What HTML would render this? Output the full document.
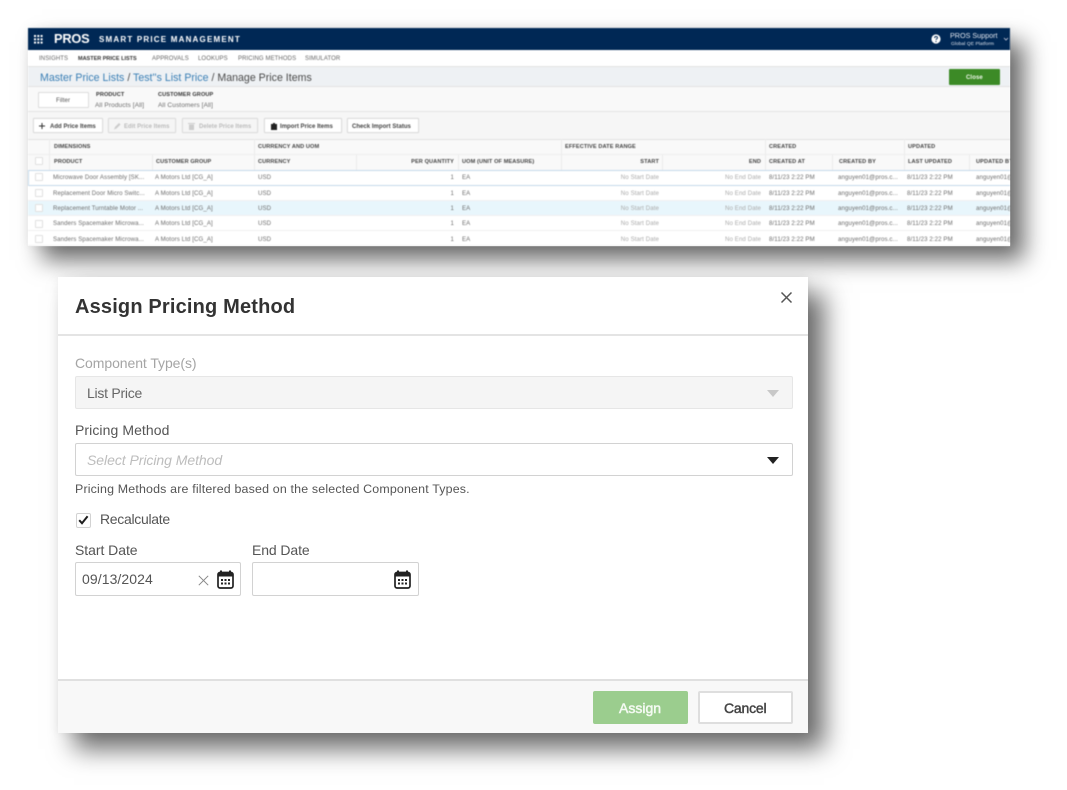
<!DOCTYPE html>
<html lang="en">
<head>
<meta charset="utf-8">
<title>Assign Pricing Method</title>
<style>
html,body{margin:0;padding:0;background:#fff;width:1067px;height:790px;overflow:hidden}
body{position:relative;font-family:"Liberation Sans",sans-serif}
.a{position:absolute}
.t{position:absolute;white-space:nowrap;line-height:1}
#sh1{position:absolute;left:28px;top:28px;width:982px;height:218px;box-shadow:14px 14px 22px rgba(0,0,0,.58),0 0 10px rgba(0,0,0,.06)}
#sh2{position:absolute;left:58px;top:277px;width:750px;height:456px;box-shadow:16px 16px 24px rgba(0,0,0,.58),0 0 10px rgba(0,0,0,.06)}
#top{position:absolute;left:28px;top:28px;width:982px;height:218px;background:#fff;overflow:hidden;filter:blur(.4px)}
#top .t{font-size:6.1px;color:#6e6e6e;letter-spacing:.1px}
#top .h{font-weight:bold;color:#444;font-size:5.6px;letter-spacing:.1px}
#top .nav{font-size:6px;top:27.5px;color:#666}
.btn{position:absolute;top:90px;height:15px;background:#fff;border:1px solid #dcdcdc;border-radius:1px;box-sizing:border-box;box-shadow:0 0 1px rgba(0,0,0,.1)}
.btn span{position:absolute;top:4.5px;font-size:6px;white-space:nowrap;color:#444;line-height:1;font-weight:bold;letter-spacing:.03px}
.row{position:absolute;left:0;width:982px;height:15px;border-bottom:1px solid #f0f0f0;box-sizing:border-box}
.cb{position:absolute;left:7px;width:6px;height:6px;border:1px solid #e0e0e0;background:#fff;border-radius:1px}
.v{position:absolute;top:111px;width:1px;height:31px;background:#ececec}
#dlg{position:absolute;left:58px;top:277px;width:750px;height:456px;background:#fff;overflow:hidden;filter:blur(.3px)}
#dlg .t{color:#555;font-size:14px;letter-spacing:.08px}
.box{position:absolute;box-sizing:border-box;border:1px solid #d2d2d2;border-radius:2px;background:#fff}
</style>
</head>
<body>
<div id="sh1"></div>
<div id="sh2"></div>
<div id="top">
  <div class="a" style="left:0;top:0;width:982px;height:22px;background:#002855"></div>
  <svg class="a" style="left:6px;top:7px" width="9" height="9" viewBox="0 0 9 9" fill="#fff"><rect x="0" y="0" width="2" height="2"/><rect x="3.3" y="0" width="2" height="2"/><rect x="6.6" y="0" width="2" height="2"/><rect x="0" y="3.3" width="2" height="2"/><rect x="3.3" y="3.3" width="2" height="2"/><rect x="6.6" y="3.3" width="2" height="2"/><rect x="0" y="6.6" width="2" height="2"/><rect x="3.3" y="6.6" width="2" height="2"/><rect x="6.6" y="6.6" width="2" height="2"/></svg>
  <div class="t" style="left:26px;top:4.5px;font-weight:bold"><span style="font-size:12.8px;color:#fff;letter-spacing:-.2px">PROS</span></div>
  <div class="t" style="left:71px;top:7.5px;color:#fff;font-size:8px;letter-spacing:1.2px;font-weight:bold">SMART PRICE MANAGEMENT</div>
  <svg class="a" style="left:903px;top:6px" width="10" height="10" viewBox="0 0 10 10"><circle cx="5" cy="5" r="4.6" fill="#fff"/><path d="M3.6 4c0-2 2.9-2 2.9-.2 0 1-1.5 1.1-1.5 2.1" fill="none" stroke="#002855" stroke-width="1"/><circle cx="5" cy="7.5" r=".6" fill="#002855"/></svg>
  <div class="t" style="left:922px;top:3.5px;color:#dfe5ee;font-size:7.2px;letter-spacing:0">PROS Support</div>
  <div class="t" style="left:923px;top:15px;color:#dfe5ee;font-size:4.8px;letter-spacing:.1px">Global QE Platform</div>
  <svg class="a" style="left:975px;top:9px" width="6" height="4" viewBox="0 0 6 4"><path d="M1 1l2 2 2-2" fill="none" stroke="#ccd" stroke-width=".8"/></svg>

  <div class="t nav" style="left:11px">INSIGHTS</div>
  <div class="t nav" style="left:50px;top:28.5px;font-weight:bold;color:#333;font-size:5.5px;letter-spacing:0">MASTER PRICE LISTS</div>
  <div class="t nav" style="left:124px">APPROVALS</div>
  <div class="t nav" style="left:170px">LOOKUPS</div>
  <div class="t nav" style="left:210px">PRICING METHODS</div>
  <div class="t nav" style="left:277px">SIMULATOR</div>

  <div class="a" style="left:0;top:38px;width:982px;height:21px;background:#eef1f4;border-top:1px solid #e3e3e3;border-bottom:1px solid #e3e3e3;box-sizing:border-box"></div>
  <div class="t" style="left:12px;top:44.5px;font-size:10.6px;color:#4a4a4a;letter-spacing:.01px"><span style="color:#3a7fb5">Master Price Lists</span> / <span style="color:#3a7fb5">Test''s List Price</span> / Manage Price Items</div>

  <div class="a" style="left:921px;top:41px;width:51px;height:16px;background:#3c8a26;border-radius:1px"></div>
  <div class="t" style="left:938px;top:46.5px;color:#eef6ea;font-weight:bold;font-size:6px">Close</div>

  <div class="a" style="left:0;top:59px;width:982px;height:25px;background:#f9f9f9;border-bottom:1px solid #e3e3e3;box-sizing:border-box"></div>
  <div class="a" style="left:10px;top:64px;width:51px;height:16px;background:#fff;border:1px solid #dcdcdc;box-sizing:border-box;border-radius:1px"></div>
  <div class="t" style="left:28px;top:69.5px;color:#555">Filter</div>
  <div class="t h" style="left:68px;top:64.5px;color:#333">PRODUCT</div>
  <div class="t" style="left:67px;top:75px;font-size:6.5px">All Products [All]</div>
  <div class="t h" style="left:130px;top:64.5px;color:#333">CUSTOMER GROUP</div>
  <div class="t" style="left:130px;top:75px;font-size:6.5px">All Customers [All]</div>

  <div class="a" style="left:0;top:84px;width:982px;height:27px;background:#f6f6f6"></div>
  <div class="btn" style="left:5px;width:70px"><span style="left:16px">Add Price Items</span></div>
  <svg class="a" style="left:11px;top:95px" width="6" height="6" viewBox="0 0 6 6"><path d="M3 0v6M0 3h6" stroke="#333" stroke-width="1"/></svg>
  <div class="btn" style="left:80px;width:68px;background:#f5f5f5"><span style="left:15px;color:#bbb">Edit Price Items</span></div>
  <svg class="a" style="left:85px;top:94px" width="9" height="8" viewBox="0 0 9 8"><path d="M1 7.5l1-2.5 4-4 1.5 1.5-4 4z" fill="#ccc"/></svg>
  <div class="btn" style="left:154px;width:76px;background:#f5f5f5"><span style="left:16px;color:#bbb">Delete Price Items</span></div>
  <svg class="a" style="left:160px;top:94px" width="7" height="8" viewBox="0 0 7 8"><path d="M0 1h7v1H0zM1 2.5h5V8H1z" fill="#ccc"/></svg>
  <div class="btn" style="left:236px;width:78px"><span style="left:15px">Import Price Items</span></div>
  <svg class="a" style="left:243px;top:94.5px" width="6" height="7" viewBox="0 0 6 7"><path d="M2 0h2v1h2v6H0V1h2z" fill="#222"/></svg>
  <div class="btn" style="left:319px;width:72px"><span style="left:4px">Check Import Status</span></div>

  <div class="a" style="left:0;top:111px;width:982px;height:31px;background:#f9f9f9;border-top:1px solid #e2e2e2;box-sizing:border-box"></div>
  <div class="a" style="left:0;top:126px;width:982px;height:1px;background:#eeeeee"></div>
  <div class="v" style="left:21px"></div><div class="v" style="left:226px"></div><div class="v" style="left:533px"></div><div class="v" style="left:737px"></div><div class="v" style="left:876px"></div>
  <div class="a" style="left:124px;top:127px;width:1px;height:15px;background:#ececec"></div>
  <div class="a" style="left:328px;top:127px;width:1px;height:15px;background:#ececec"></div>
  <div class="a" style="left:430px;top:127px;width:1px;height:15px;background:#ececec"></div>
  <div class="a" style="left:634px;top:127px;width:1px;height:15px;background:#ececec"></div>
  <div class="a" style="left:804px;top:127px;width:1px;height:15px;background:#ececec"></div>
  <div class="a" style="left:941px;top:127px;width:1px;height:15px;background:#ececec"></div>

  <div class="t h" style="left:26px;top:117px">DIMENSIONS</div>
  <div class="t h" style="left:230px;top:117px">CURRENCY AND UOM</div>
  <div class="t h" style="left:537px;top:117px">EFFECTIVE DATE RANGE</div>
  <div class="t h" style="left:741px;top:117px">CREATED</div>
  <div class="t h" style="left:880px;top:117px">UPDATED</div>

  <div class="cb" style="top:129px"></div>
  <div class="t h" style="left:26px;top:132px">PRODUCT</div>
  <div class="t h" style="left:128px;top:132px">CUSTOMER GROUP</div>
  <div class="t h" style="left:230px;top:132px">CURRENCY</div>
  <div class="t h" style="right:556px;top:132px">PER QUANTITY</div>
  <div class="t h" style="left:434px;top:132px">UOM (UNIT OF MEASURE)</div>
  <div class="t h" style="right:351px;top:132px">START</div>
  <div class="t h" style="right:249px;top:132px">END</div>
  <div class="t h" style="left:741px;top:132px">CREATED AT</div>
  <div class="t h" style="left:811px;top:132px">CREATED BY</div>
  <div class="t h" style="left:880px;top:132px">LAST UPDATED</div>
  <div class="t h" style="left:948px;top:132px">UPDATED BY</div>

  <div class="row" style="top:141.5px;height:16.5px;border:1.5px solid #c5d9ea;border-right:0"></div>
  <div class="row" style="top:158px"></div>
  <div class="row" style="top:173px;height:15px;background:#e8f6fc"></div>
  <div class="row" style="top:188px"></div>
  <div class="row" style="top:203px"></div>

  <div class="cb" style="top:145px"></div>
  <div class="t" style="left:25px;top:147px">Microwave Door Assembly [SK...</div><div class="t" style="left:127px;top:147px">A Motors Ltd [CG_A]</div><div class="t" style="left:230px;top:147px">USD</div><div class="t" style="right:556px;top:147px">1</div><div class="t" style="left:434px;top:147px">EA</div><div class="t" style="right:351px;top:147px;color:#aaa">No Start Date</div><div class="t" style="right:249px;top:147px;color:#aaa">No End Date</div><div class="t" style="left:741px;top:147px">8/11/23 2:22 PM</div><div class="t" style="left:810px;top:147px">anguyen01@pros.c...</div><div class="t" style="left:879px;top:147px">8/11/23 2:22 PM</div><div class="t" style="left:948px;top:147px">anguyen01@pros</div>

  <div class="cb" style="top:161px"></div>
  <div class="t" style="left:25px;top:162.5px">Replacement Door Micro Switc...</div><div class="t" style="left:127px;top:162.5px">A Motors Ltd [CG_A]</div><div class="t" style="left:230px;top:162.5px">USD</div><div class="t" style="right:556px;top:162.5px">1</div><div class="t" style="left:434px;top:162.5px">EA</div><div class="t" style="right:351px;top:162.5px;color:#aaa">No Start Date</div><div class="t" style="right:249px;top:162.5px;color:#aaa">No End Date</div><div class="t" style="left:741px;top:162.5px">8/11/23 2:22 PM</div><div class="t" style="left:810px;top:162.5px">anguyen01@pros.c...</div><div class="t" style="left:879px;top:162.5px">8/11/23 2:22 PM</div><div class="t" style="left:948px;top:162.5px">anguyen01@pros</div>

  <div class="cb" style="top:176px"></div>
  <div class="t" style="left:25px;top:178px">Replacement Turntable Motor ...</div><div class="t" style="left:127px;top:178px">A Motors Ltd [CG_A]</div><div class="t" style="left:230px;top:178px">USD</div><div class="t" style="right:556px;top:178px">1</div><div class="t" style="left:434px;top:178px">EA</div><div class="t" style="right:351px;top:178px;color:#aaa">No Start Date</div><div class="t" style="right:249px;top:178px;color:#aaa">No End Date</div><div class="t" style="left:741px;top:178px">8/11/23 2:22 PM</div><div class="t" style="left:810px;top:178px">anguyen01@pros.c...</div><div class="t" style="left:879px;top:178px">8/11/23 2:22 PM</div><div class="t" style="left:948px;top:178px">anguyen01@pros</div>

  <div class="cb" style="top:192px"></div>
  <div class="t" style="left:25px;top:193px">Sanders Spacemaker Microwa...</div><div class="t" style="left:127px;top:193px">A Motors Ltd [CG_A]</div><div class="t" style="left:230px;top:193px">USD</div><div class="t" style="right:556px;top:193px">1</div><div class="t" style="left:434px;top:193px">EA</div><div class="t" style="right:351px;top:193px;color:#aaa">No Start Date</div><div class="t" style="right:249px;top:193px;color:#aaa">No End Date</div><div class="t" style="left:741px;top:193px">8/11/23 2:22 PM</div><div class="t" style="left:810px;top:193px">anguyen01@pros.c...</div><div class="t" style="left:879px;top:193px">8/11/23 2:22 PM</div><div class="t" style="left:948px;top:193px">anguyen01@pros</div>

  <div class="cb" style="top:207px"></div>
  <div class="t" style="left:25px;top:208.5px">Sanders Spacemaker Microwa...</div><div class="t" style="left:127px;top:208.5px">A Motors Ltd [CG_A]</div><div class="t" style="left:230px;top:208.5px">USD</div><div class="t" style="right:556px;top:208.5px">1</div><div class="t" style="left:434px;top:208.5px">EA</div><div class="t" style="right:351px;top:208.5px;color:#aaa">No Start Date</div><div class="t" style="right:249px;top:208.5px;color:#aaa">No End Date</div><div class="t" style="left:741px;top:208.5px">8/11/23 2:22 PM</div><div class="t" style="left:810px;top:208.5px">anguyen01@pros.c...</div><div class="t" style="left:879px;top:208.5px">8/11/23 2:22 PM</div><div class="t" style="left:948px;top:208.5px">anguyen01@pros</div>
</div>

<div id="dlg">
  <div class="t" style="left:17px;top:19.5px;font-size:20px;font-weight:bold;color:#333;letter-spacing:.17px">Assign Pricing Method</div>
  <svg class="a" style="left:722px;top:14px" width="13" height="13" viewBox="0 0 13 13"><path d="M1.5 1.5l10 10M11.5 1.5l-10 10" stroke="#555" stroke-width="1.5" fill="none"/></svg>
  <div class="a" style="left:0;top:57px;width:750px;height:2px;background:#e4e4e4"></div>

  <div class="t" style="left:17px;top:79px;color:#a5a5a5;letter-spacing:-.07px">Component Type(s)</div>
  <div class="box" style="left:17px;top:99px;width:718px;height:33px;background:#f5f5f5;border-color:#e6e6e6"></div>
  <div class="t" style="left:29px;top:109px;color:#666;letter-spacing:-.25px">List Price</div>
  <svg class="a" style="left:709px;top:113px" width="12" height="7" viewBox="0 0 12 7"><path d="M0 0h12L6 7z" fill="#c8c8c8"/></svg>

  <div class="t" style="left:17px;top:146px">Pricing Method</div>
  <div class="box" style="left:17px;top:166px;width:718px;height:33px"></div>
  <div class="t" style="left:29px;top:176px;font-style:italic;color:#bdbdbd;letter-spacing:-.05px">Select Pricing Method</div>
  <svg class="a" style="left:709px;top:180px" width="12" height="7" viewBox="0 0 12 7"><path d="M0 0h12L6 7z" fill="#222"/></svg>
  <div class="t" style="left:17px;top:206px;font-size:12.4px;letter-spacing:.18px">Pricing Methods are filtered based on the selected Component Types.</div>

  <div class="box" style="left:18px;top:236px;width:15px;height:15px"></div>
  <svg class="a" style="left:20px;top:238px" width="11" height="10" viewBox="0 0 11 10"><path d="M1.2 5.2l2.8 3 5.6-7" fill="none" stroke="#1d1d1d" stroke-width="2"/></svg>
  <div class="t" style="left:42px;top:235px;letter-spacing:-.3px">Recalculate</div>

  <div class="t" style="left:17px;top:266px;letter-spacing:-.05px">Start Date</div>
  <div class="box" style="left:17px;top:285px;width:166px;height:34px"></div>
  <div class="t" style="left:24px;top:295px">09/13/2024</div>
  <svg class="a" style="left:140px;top:298px" width="11" height="11" viewBox="0 0 11 11"><path d="M.8.8l9.4 9.4M10.2.8L.8 10.2" stroke="#888" stroke-width="1" fill="none"/></svg>
  <svg class="a" style="left:159px;top:293px" width="17" height="19" viewBox="0 0 17 19"><path d="M4 0.5v3M13 0.5v3" stroke="#222" stroke-width="2"/><rect x="1" y="2.5" width="15" height="15.5" rx="2" fill="none" stroke="#222" stroke-width="1.7"/><rect x="1" y="3" width="15" height="3.5" fill="#222"/><path d="M4 9h2v2H4zM7.5 9h2v2h-2zM11 9h2v2h-2zM4 12.5h2v2H4zM7.5 12.5h2v2h-2zM11 12.5h2v2h-2z" fill="#222"/></svg>

  <div class="t" style="left:194px;top:266px;letter-spacing:-.1px">End Date</div>
  <div class="box" style="left:194px;top:285px;width:167px;height:34px"></div>
  <svg class="a" style="left:336px;top:293px" width="17" height="19" viewBox="0 0 17 19"><path d="M4 0.5v3M13 0.5v3" stroke="#222" stroke-width="2"/><rect x="1" y="2.5" width="15" height="15.5" rx="2" fill="none" stroke="#222" stroke-width="1.7"/><rect x="1" y="3" width="15" height="3.5" fill="#222"/><path d="M4 9h2v2H4zM7.5 9h2v2h-2zM11 9h2v2h-2zM4 12.5h2v2H4zM7.5 12.5h2v2h-2zM11 12.5h2v2h-2z" fill="#222"/></svg>

  <div class="a" style="left:0;top:402px;width:750px;height:54px;background:#f8f8f8;border-top:2px solid #e0e0e0;box-sizing:border-box"></div>
  <div class="a" style="left:535px;top:414px;width:95px;height:33px;background:#9bcd8e;border-radius:2px"></div>
  <div class="t" style="left:561px;top:424px;color:#f4faf2;-webkit-text-stroke:.5px #f4faf2;letter-spacing:0">Assign</div>
  <div class="box" style="left:640px;top:414px;width:95px;height:33px;border:2px solid #dedede"></div>
  <div class="t" style="left:666px;top:424px;color:#444;-webkit-text-stroke:.45px #444;letter-spacing:-.2px">Cancel</div>
</div>
</body>
</html>
